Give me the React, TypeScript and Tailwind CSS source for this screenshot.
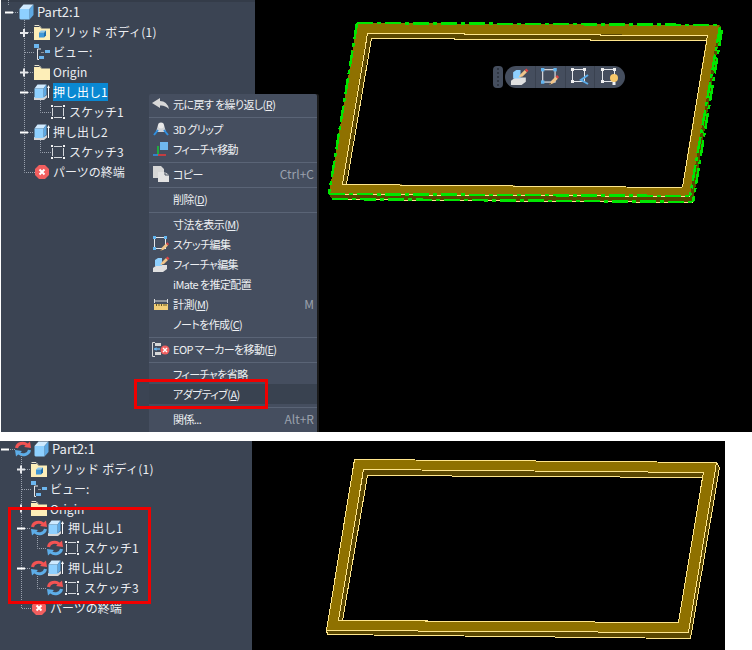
import React from "react";

const FONT = "font-['Noto_Sans_CJK_JP','Noto_Sans',sans-serif]";

function Cube() {
  return (
    <svg width="15" height="16" viewBox="0 0 15 16" className="shrink-0">
      <polygon points="0.5,5 4.5,0.5 14.5,0.5 10.5,5" fill="#cfeaff" />
      <polygon points="10.5,5 14.5,0.5 14.5,11 10.5,15.5" fill="#5ea9e4" />
      <polygon points="0.5,5 10.5,5 10.5,15.5 1.5,15.5 0.5,14.5" fill="#8ed0ff" />
    </svg>
  );
}

function Folder({ cube }: { cube?: boolean }) {
  return (
    <svg width="16" height="15" viewBox="0 0 16 15" className="shrink-0">
      <path d="M0 2 H6 L7.5 3.5 H16 V15 H0 Z" fill="#fdeeb8" />
      <path d="M0.5 0.5 H5 L7 2.5" stroke="#e9e4d0" strokeWidth="1" fill="none" />
      {cube && (
        <g>
          <polygon points="5,7.5 7,5.5 12,5.5 10,7.5" fill="#8fc8f0" />
          <polygon points="10,7.5 12,5.5 12,10.5 10,12.5" fill="#1f6fae" />
          <polygon points="5,7.5 10,7.5 10,12.5 5,12.5" fill="#3f97d8" />
        </g>
      )}
    </svg>
  );
}

function ViewIcon() {
  return (
    <svg width="16" height="16" viewBox="0 0 16 16" className="shrink-0">
      <rect x="0" y="0" width="5" height="4" fill="#6cb6ee" />
      <rect x="11" y="6" width="5" height="3" fill="#6cb6ee" />
      <rect x="5" y="12" width="5" height="3" fill="#6cb6ee" />
      <path d="M3.5 5 V15.5 M3.5 5 H7 M3.5 15.5 H5" stroke="#e8e8e8" strokeWidth="1" fill="none" />
      <path d="M7.5 8.5 H10" stroke="#e8e8e8" strokeWidth="1" strokeDasharray="1 1" />
    </svg>
  );
}

function Extrude() {
  return (
    <svg width="16" height="17" viewBox="0 0 16 17" className="shrink-0">
      <polygon points="0,13 10,13 13,11 13,13.5 10,16 0,16" fill="#d6d6d6" />
      <polygon points="0.5,4.5 3.5,0.5 12.5,0.5 9.5,4.5" fill="#cfeaff" />
      <polygon points="9.5,4.5 12.5,0.5 12.5,10.5 9.5,14" fill="#5ea9e4" />
      <polygon points="0.5,4.5 9.5,4.5 9.5,14 0.5,14" fill="#8ed0ff" />
      <path d="M14.5 2.5 V14" stroke="#ffffff" strokeWidth="1" />
      <path d="M13 4 L14.5 1 L16 4 Z" fill="#ffffff" />
    </svg>
  );
}

function SketchIcon() {
  return (
    <svg width="14" height="14" viewBox="0 0 14 14" className="shrink-0">
      <path d="M3 1.5 H11 M3 12.5 H11 M1.5 3 V11 M12.5 3 V11" fill="none" stroke="#d4d7dc" strokeWidth="1" />
      {[[0, 0], [12, 0], [0, 12], [12, 12]].map(([x, y]) => (
        <rect key={`${x}-${y}`} x={x} y={y} width="2" height="2" fill="#f4f4f4" />
      ))}
    </svg>
  );
}

function ErrorIcon() {
  return (
    <svg width="14" height="14" viewBox="0 0 14 14" className="shrink-0">
      <polygon points="4,0 10,0 14,4 14,10 10,14 4,14 0,10 0,4" fill="#f25f5f" />
      <path d="M4.5 4.5 L9.5 9.5 M9.5 4.5 L4.5 9.5" stroke="#ffffff" strokeWidth="2" />
    </svg>
  );
}

function Sync() {
  return (
    <svg width="16" height="16" viewBox="0 0 16 16" className="shrink-0">
      <path d="M1.5 7 A6.2 5.5 0 0 1 12 3.8" stroke="#f25353" strokeWidth="3" fill="none" />
      <polygon points="9,6 16,7 15,0.5" fill="#f25353" />
      <path d="M14.5 9 A6.2 5.5 0 0 1 4 12.2" stroke="#5dade8" strokeWidth="3" fill="none" />
      <polygon points="7,10 0,9 1,15.5" fill="#5dade8" />
    </svg>
  );
}

function TreeRow({ className, children }: { className: string; children: React.ReactNode }) {
  return <div className={`flex items-center h-[20px] shrink-0 whitespace-nowrap ${className}`}>{children}</div>;
}

function Label({ children, className = "" }: { children: React.ReactNode; className?: string }) {
  return <span className={`text-[12px] leading-[18px] text-[#eceef2] ${className}`}>{children}</span>;
}

function TreeLinesTop() {
  const plus = (x: number, y: number) => (
    <path d={`M${x} ${y} h8 M${x + 4} ${y - 4} v8`} stroke="#e6e8ec" strokeWidth="2" />
  );
  const minus = (x: number, y: number) => <path d={`M${x} ${y} h8`} stroke="#ffffff" strokeWidth="2" />;
  return (
    <svg width="60" height="180" viewBox="0 0 60 180" className="absolute -left-px -top-[2px] pointer-events-none">
      <g stroke="#9aa2ae" strokeWidth="1" strokeDasharray="1 1" fill="none">
        <path d="M8.5 0 V6" />
        <path d="M13 12.5 H19" />
        <path d="M24.5 20 V172.5 H35" />
        <path d="M28 32.5 H34 M25 52.5 H34 M28 72.5 H34 M28 92.5 H34 M28 132.5 H34" />
        <path d="M40.5 100 V112.5 H51 M40.5 140 V152.5 H51" />
      </g>
      {minus(5, 12.5)}
      {plus(20, 33)}
      {plus(20, 72.5)}
      {minus(20, 92.5)}
      {minus(20, 132.5)}
    </svg>
  );
}

function TreeLinesBottom() {
  const plus = (x: number, y: number) => (
    <path d={`M${x} ${y} h8 M${x + 4} ${y - 4} v8`} stroke="#e6e8ec" strokeWidth="2" />
  );
  const minus = (x: number, y: number) => <path d={`M${x} ${y} h8`} stroke="#ffffff" strokeWidth="2" />;
  return (
    <svg width="60" height="180" viewBox="0 0 60 180" className="absolute left-0 top-0 pointer-events-none">
      <g stroke="#9aa2ae" strokeWidth="1" strokeDasharray="1 1" fill="none">
        <path d="M10 8.5 H15" />
        <path d="M21.5 14 V167.5 H32" />
        <path d="M25 28.5 H31 M22 48.5 H31 M25 87.5 H31 M25 127.5 H31" />
        <path d="M37.5 95 V107.5 H47 M37.5 135 V147.5 H47" />
      </g>
      {minus(1, 8.5)}
      {plus(17, 28.5)}
      {plus(17, 67.5)}
      {minus(17, 87.5)}
      {minus(17, 127.5)}
    </svg>
  );
}

function UndoIcon() {
  return (
    <svg width="18" height="12" viewBox="0 0 18 12">
      <path d="M0 5 L8 0 V3 Q15 3 17 11 Q13 7 8 7.5 V10 Z" fill="#d8d8d8" />
    </svg>
  );
}
function GripIcon() {
  return (
    <svg width="16" height="15" viewBox="0 0 16 15">
      <polygon points="5,3 11,3 13,10 3,10" fill="#cfd2d6" />
      <circle cx="8" cy="3.5" r="3" fill="#e8e8e8" />
      <path d="M5 8 L1 13 M11 8 L15 13" stroke="#2f8fe0" strokeWidth="2" />
    </svg>
  );
}
function MoveIcon() {
  return (
    <svg width="16" height="15" viewBox="0 0 16 15">
      <rect x="7" y="0" width="8" height="8" fill="#6fb8ee" />
      <path d="M5 13 V4" stroke="#19c23a" strokeWidth="1.6" />
      <path d="M5 13 H0" stroke="#2f8fe0" strokeWidth="1.6" />
      <path d="M5 13 H13" stroke="#e23a3a" strokeWidth="1.6" />
    </svg>
  );
}
function CopyIcon() {
  return (
    <svg width="17" height="17" viewBox="0 0 17 17">
      <path d="M0 0 H8 L11 3 V6 H5 V12 H0 Z" fill="#d6d6d6" />
      <path d="M5 6 H12 L16 9 V16 H5 Z" fill="#e2e2e2" />
      <path d="M12 6 V9 H16" stroke="#454e5f" strokeWidth="1" fill="none" />
    </svg>
  );
}
function SketchEditIcon({ size = 16 }: { size?: number }) {
  return (
    <svg width={size} height={size} viewBox="0 0 16 16">
      <rect x="1.5" y="1.5" width="11" height="11" fill="none" stroke="#e6e8ec" strokeWidth="1" />
      {[[0, 0], [11, 0], [0, 11]].map(([x, y]) => (
        <rect key={`${x}-${y}`} x={x} y={y} width="3" height="3" fill="#63b5ef" />
      ))}
      <path d="M7 15 L9 11.5 L13 7.5 L15 9.5 L11 13.5 Z" fill="#f1c58a" />
      <path d="M13 7.5 L14.3 6.2 L16 8 L15 9.5 Z" fill="#e04545" />
      <path d="M7 15 L8 13 L9 14 Z" fill="#3a3a3a" />
    </svg>
  );
}
function FeatureEditIcon({ size = 17 }: { size?: number }) {
  return (
    <svg width={size} height={size} viewBox="0 0 17 17">
      <polygon points="0,12 4,9 14,9 14,13 10,16 0,16" fill="#e0e0e0" />
      <polygon points="2,4 5,2 9,2 9,10 2,10" fill="#8ed0ff" />
      <path d="M7 9 L9 6 L13 2 L15 4 L11 8 Z" fill="#f1c58a" />
      <path d="M13 2 L14.5 0.5 L16.5 2.5 L15 4 Z" fill="#e04545" />
    </svg>
  );
}
function RulerIcon() {
  return (
    <svg width="14" height="11" viewBox="0 0 14 11">
      <path d="M0.5 0 V4 M13.5 0 V4 M1 2 H13" stroke="#d9d9d9" strokeWidth="1" fill="none" />
      <rect x="0" y="5" width="14" height="6" fill="#f3cf78" />
      <path d="M2.5 5 V7 M5 5 V7 M7.5 5 V7 M10 5 V7 M12 5 V7" stroke="#6b5a20" strokeWidth="1" />
    </svg>
  );
}
function EopIcon() {
  return (
    <svg width="18" height="15" viewBox="0 0 18 15">
      <path d="M3 0.5 H0.5 V14.5 H3" stroke="#d8d8d8" strokeWidth="1" fill="none" />
      <rect x="3" y="1" width="6" height="3" fill="#d8d8d8" />
      <rect x="3" y="10" width="6" height="3" fill="#d8d8d8" />
      <path d="M2 7 H8" stroke="#6cb6ee" strokeWidth="1.4" />
      <path d="M2 7 L4.5 5 V9 Z" fill="#6cb6ee" />
      <circle cx="13" cy="8" r="4.5" fill="#f25f5f" />
      <path d="M11 6 L15 10 M15 6 L11 10" stroke="#fff" strokeWidth="1.4" />
    </svg>
  );
}

function Sep() {
  return (
    <div className="h-[5px] shrink-0 pt-[3px]">
      <div className="h-px bg-[#5a6476]" />
    </div>
  );
}

function MenuItem({
  icon,
  children,
  shortcut,
  active,
}: {
  icon?: React.ReactNode;
  children: React.ReactNode;
  shortcut?: string;
  active?: boolean;
}) {
  return (
    <div className={`flex items-center h-[20px] shrink-0 ${active ? "bg-[#394250]" : ""}`}>
      <div className="w-[24px] shrink-0 flex items-center justify-center">{icon}</div>
      <span className="text-[11px] tracking-[-0.6px] text-[#eef0f3] whitespace-nowrap [font-feature-settings:'palt']">
        {children}
      </span>
      {shortcut && <span className="ml-auto pr-[3px] text-[12px] text-[#9aa1ad]">{shortcut}</span>}
    </div>
  );
}

function ContextMenu() {
  return (
    <div className="absolute left-[149px] top-[94px] w-[168px] h-[338px] flex flex-col bg-[#454e5f] rounded-t-[2px] shadow-[2px_0_0_#1a1a1a]">
      <MenuItem icon={<UndoIcon />}>
        元に戻す を繰り返し(<u>R</u>)
      </MenuItem>
      <Sep />
      <MenuItem icon={<GripIcon />}>3D グリップ</MenuItem>
      <MenuItem icon={<MoveIcon />}>フィーチャ移動</MenuItem>
      <Sep />
      <MenuItem icon={<CopyIcon />} shortcut="Ctrl+C">
        コピー
      </MenuItem>
      <Sep />
      <MenuItem>
        削除(<u>D</u>)
      </MenuItem>
      <Sep />
      <MenuItem>
        寸法を表示(<u>M</u>)
      </MenuItem>
      <MenuItem icon={<SketchEditIcon />}>スケッチ編集</MenuItem>
      <MenuItem icon={<FeatureEditIcon />}>フィーチャ編集</MenuItem>
      <MenuItem>iMate を推定配置</MenuItem>
      <MenuItem icon={<RulerIcon />} shortcut="M">
        計測(<u>M</u>)
      </MenuItem>
      <MenuItem>
        ノートを作成(<u>C</u>)
      </MenuItem>
      <Sep />
      <MenuItem icon={<EopIcon />}>
        EOP マーカーを移動(<u>E</u>)
      </MenuItem>
      <Sep />
      <MenuItem>フィーチャを省略</MenuItem>
      <MenuItem active>
        アダプティブ(<u>A</u>)
      </MenuItem>
      <Sep />
      <MenuItem shortcut="Alt+R">関係...</MenuItem>
    </div>
  );
}

function TopModel() {
  const outer = "357,23 719,25 690,196 329,194";
  const inner = "367,33 707,35 682,187 342,184";
  const hole = "371,38 706,41 682,187 346,184";
  return (
    <svg viewBox="255 0 497 432" shapeRendering="crispEdges" className="block w-full h-full">
      <polygon points="329,194 690,196 719,25 721,27 693,203 332,199" fill="#5a4700" />
      <polygon points={outer} fill="#8f7100" />
      <polygon points={inner} fill="#5a4700" />
      <polygon points={hole} fill="#000000" />
      <g transform="translate(0.5 0.5)" fill="none" stroke="#ffe68c" strokeWidth="1">
        <polyline points="367,33 464,33 464,34 600,34 600,35 707,35 682,187" />
        <polyline points="371,38 454,38 454,39 590,39 590,40 706,40" />
        <polyline points="367,33 342,184 682,187" />
        <polyline points="371,38 346,184" />
        <polyline points="329,194 690,196" />
        <polyline points="332,199 693,202" />
      </g>
      <g fill="none" stroke="#00e600" strokeWidth="2.5" strokeDasharray="16 4 4 4">
        <polyline points="357,23 719,25" />
        <polyline points="357,23 329,194" />
        <polyline points="329,194 690,196" />
        <polyline points="332,199 693,202" />
        <polyline points="720,27 690,196" />
        <polyline points="722,30 693,202" />
      </g>
    </svg>
  );
}

function BottomModel() {
  return (
    <svg viewBox="252 441 473 209" shapeRendering="crispEdges" className="block w-full h-full">
      <g transform="translate(0.5 0.5)" stroke="#ffe68c" strokeWidth="1">
        <polygon points="326,630 688,632 716,462 719,467 690,638 327,634" fill="#5a4700" />
        <polygon points="354,459 716,462 688,632 326,630" fill="#8f7100" />
        <polygon points="363,469 703,472 678,622 338,620" fill="#5a4700" />
        <polygon points="367,475 702,477 678,622 342,620" fill="#000000" />
      </g>
    </svg>
  );
}

function ToolBtn({ children, last }: { children: React.ReactNode; last?: boolean }) {
  return (
    <div className={`w-[30px] h-full flex items-center justify-center ${last ? "" : "border-r border-[#3a4250]"}`}>
      {children}
    </div>
  );
}

function SketchSmall({ variant }: { variant: "share" | "bulb" }) {
  return (
    <svg width="18" height="18" viewBox="0 0 18 18">
      <rect x="1.5" y="1.5" width="12" height="12" fill="none" stroke="#e6e8ec" strokeWidth="1" />
      {[[0, 0], [12, 0], [0, 12]].map(([x, y]) => (
        <rect key={`${x}-${y}`} x={x} y={y} width="3" height="3" fill="#f0f0f0" />
      ))}
      {variant === "share" ? (
        <path d="M17 7 L10 12 L17 16" stroke="#5dade8" strokeWidth="2" fill="none" />
      ) : (
        <g>
          <circle cx="13" cy="10" r="4" fill="#f7c86a" />
          <rect x="11.5" y="14" width="3" height="3" fill="#f2f2f2" />
        </g>
      )}
    </svg>
  );
}

function MiniToolbar() {
  return (
    <div className="absolute left-[238px] top-[66px] flex gap-[2px] h-[22px]">
      <div className="w-[10px] h-full rounded-[4px] bg-[#454e5e] flex flex-col items-center justify-center gap-[2px]">
        {[0, 1, 2, 3, 4].map((i) => (
          <div key={i} className="w-[2px] h-[2px] bg-[#2f3642]" />
        ))}
      </div>
      <div className="w-[120px] h-full rounded-full bg-[#454e5e] flex pl-[1px]">
        <ToolBtn>
          <FeatureEditIcon size={18} />
        </ToolBtn>
        <ToolBtn>
          <SketchEditIcon size={18} />
        </ToolBtn>
        <ToolBtn>
          <SketchSmall variant="share" />
        </ToolBtn>
        <ToolBtn last>
          <SketchSmall variant="bulb" />
        </ToolBtn>
      </div>
    </div>
  );
}

export default function App() {
  return (
    <div className={`relative w-[752px] h-[650px] bg-white overflow-hidden ${FONT}`}>
      <section className="relative h-[432px] flex pl-px overflow-hidden">
        <div className="relative w-[254px] shrink-0 h-full bg-[#3b4453] border-t-2 border-[#343c49] flex flex-col">
          <TreeRow className="pl-[18px] gap-[3px]">
            <Cube />
            <Label className="text-[13px]">Part2:1</Label>
          </TreeRow>
          <TreeRow className="pl-[33px] gap-[3px]">
            <Folder cube />
            <Label className="tracking-[0.3px]">ソリッド ボディ(1)</Label>
          </TreeRow>
          <TreeRow className="pl-[33px] gap-[3px]">
            <ViewIcon />
            <Label>ビュー:</Label>
          </TreeRow>
          <TreeRow className="pl-[33px] gap-[3px]">
            <Folder />
            <Label>Origin</Label>
          </TreeRow>
          <TreeRow className="pl-[33px] gap-[3px]">
            <Extrude />
            <Label className="bg-[#0a88d2] text-white w-[55px]">押し出し1</Label>
          </TreeRow>
          <TreeRow className="pl-[50px] gap-[4px]">
            <SketchIcon />
            <Label>スケッチ1</Label>
          </TreeRow>
          <TreeRow className="pl-[33px] gap-[3px]">
            <Extrude />
            <Label>押し出し2</Label>
          </TreeRow>
          <TreeRow className="pl-[50px] gap-[4px]">
            <SketchIcon />
            <Label>スケッチ3</Label>
          </TreeRow>
          <TreeRow className="pl-[34px] gap-[4px]">
            <ErrorIcon />
            <Label>パーツの終端</Label>
          </TreeRow>
          <TreeLinesTop />
        </div>
        <div className="relative flex-1 h-full bg-black">
          <TopModel />
          <MiniToolbar />
        </div>
        <ContextMenu />
        <div className="absolute left-[134px] top-[379px] w-[134px] h-[30px] border-[3px] border-[#f00000] pointer-events-none" />
      </section>

      <section className="relative h-[209px] w-[725px] mt-[9px] flex">
        <div className="relative w-[252px] shrink-0 h-full bg-[#3b4453] flex flex-col">
          <TreeRow className="pl-[15px] !h-[18px] !items-start">
            <Sync />
            <div className="ml-[3px]">
              <Cube />
            </div>
            <Label className="ml-[3px] text-[13px] !leading-[16px]">Part2:1</Label>
          </TreeRow>
          <TreeRow className="pl-[31px] gap-[3px]">
            <Folder cube />
            <Label className="tracking-[0.3px]">ソリッド ボディ(1)</Label>
          </TreeRow>
          <TreeRow className="pl-[31px] gap-[3px]">
            <ViewIcon />
            <Label>ビュー:</Label>
          </TreeRow>
          <TreeRow className="pl-[31px] gap-[3px] !h-[19px]">
            <Folder />
            <Label>Origin</Label>
          </TreeRow>
          <TreeRow className="pl-[31px]">
            <Sync />
            <div className="ml-[1px]">
              <Extrude />
            </div>
            <Label className="ml-[4px]">押し出し1</Label>
          </TreeRow>
          <TreeRow className="pl-[47px]">
            <Sync />
            <div className="ml-[2px]">
              <SketchIcon />
            </div>
            <Label className="ml-[5px]">スケッチ1</Label>
          </TreeRow>
          <TreeRow className="pl-[31px]">
            <Sync />
            <div className="ml-[1px]">
              <Extrude />
            </div>
            <Label className="ml-[4px]">押し出し2</Label>
          </TreeRow>
          <TreeRow className="pl-[47px]">
            <Sync />
            <div className="ml-[2px]">
              <SketchIcon />
            </div>
            <Label className="ml-[5px]">スケッチ3</Label>
          </TreeRow>
          <TreeRow className="pl-[32px] gap-[4px]">
            <ErrorIcon />
            <Label>パーツの終端</Label>
          </TreeRow>
          <TreeLinesBottom />
        </div>
        <div className="flex-1 h-full bg-black">
          <BottomModel />
        </div>
        <div className="absolute left-[8px] top-[66px] w-[143px] h-[97px] border-[3px] border-[#f00000] pointer-events-none" />
      </section>
    </div>
  );
}
